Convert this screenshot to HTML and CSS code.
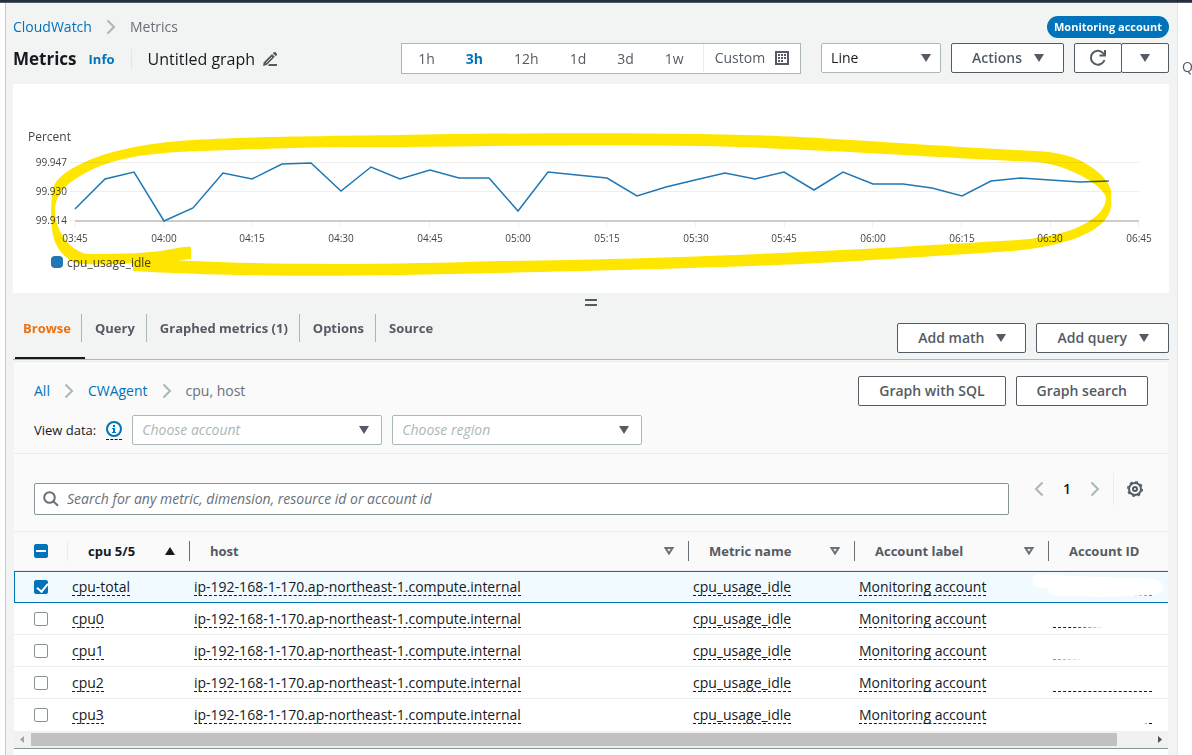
FILE: index.html
```html
<!DOCTYPE html>
<html lang="en">

<head>
    <meta charset="UTF-8">
    <meta name="viewport" content="width=device-width, initial-scale=1.0">
    <title>CloudWatch Metrics</title>
    <link rel="stylesheet" href="styles.css">
</head>

<body>
    <div class="topbar"></div>
    <div class="layout">
        <div class="left-rail"></div>

        <main class="main">
            <div class="crumb-row">
                <nav class="breadcrumb">
                    <a href="#">CloudWatch</a>
                    <svg class="chevron" viewBox="0 0 10 16"><path d="M1.500 1.500 8 8l-6.500 6.500" /></svg>
                    <span>Metrics</span>
                </nav>
                <span class="badge">Monitoring account</span>
            </div>

            <header class="title-row">
                <div class="title-group">
                    <h1>Metrics</h1>
                    <a class="info" href="#">Info</a>
                    <div class="graph-name">
                        <span>Untitled graph</span>
                        <svg class="pencil" viewBox="0 0 14 14">
                            <path d="M0 14l.8-3.800L9 2l2.800 2.800L3.800 13z" fill="#545b64" />
                            <path d="M3.200 10.800 9 5" stroke="#f2f3f3" stroke-width=".8" />
                            <path d="m9.800 1.200 1.200-1.200h1.200L14 1.800V3l-1.200 1.200zM6 12h8v2H5z" fill="#545b64" />
                        </svg>
                    </div>
                </div>

                <div class="controls">
                    <div class="range">
                        <button>1h</button>
                        <button class="active">3h</button>
                        <button>12h</button>
                        <button>1d</button>
                        <button>3d</button>
                        <button>1w</button>
                        <button class="custom">Custom
                            <svg width="14" height="14" viewBox="0 0 14 14">
                                <rect x="1" y="1" width="12" height="12" fill="#fff" stroke="#545b64" stroke-width="2" />
                                <path d="M3 4h8M3 7h8M3 10h5" stroke="#545b64" stroke-width="2" stroke-dasharray="2 1" />
                            </svg>
                        </button>
                    </div>
                    <div class="select chart-type">
                        <select aria-label="Chart type">
                            <option>Line</option>
                        </select>
                        <svg class="caret" viewBox="0 0 10 8"><path d="M0 0h10L5 8z" /></svg>
                    </div>
                    <button class="btn">Actions <svg class="caret" viewBox="0 0 10 8"><path d="M0 0h10L5 8z" /></svg></button>
                    <div class="btn-group">
                        <button class="btn" aria-label="Refresh">
                            <svg width="18" height="18" viewBox="0 0 18 18" fill="none" stroke="#545b64" stroke-width="2">
                                <path d="M15.500 11A7 7 0 1 1 14.500 4.500L16 6" />
                                <path d="M16 1v5.500h-5.500" />
                            </svg>
                        </button>
                        <button class="btn" aria-label="Refresh options"><svg class="caret" viewBox="0 0 10 8"><path d="M0 0h10L5 8z" /></svg></button>
                    </div>
                </div>
            </header>

            <section class="chart">
                <svg viewBox="13 84 1156 209">
                    <text x="28" y="141" class="unit">Percent</text>
                    <g class="grid">
                        <path d="M70 162.500H1139M70 191.500H1139M70 220.500H75" />
                        <path d="M75 222v5M163.500 222v5M252.500 222v5M340.500 222v5M429.500 222v5M518.500 222v5M606.500 222v5M695.500 222v5M784.500 222v5M872.500 222v5M961.500 222v5M1050.500 222v5M1138.500 222v5" />
                    </g>
                    <path d="M75 221H1139" stroke="#ccc" stroke-width="2" />
                    <g class="y-labels">
                        <text x="67" y="166">99.947</text>
                        <text x="67" y="195">99.930</text>
                        <text x="67" y="224">99.914</text>
                    </g>
                    <g class="x-labels">
                        <text x="75" y="242">03:45</text>
                        <text x="164" y="242">04:00</text>
                        <text x="252" y="242">04:15</text>
                        <text x="341" y="242">04:30</text>
                        <text x="430" y="242">04:45</text>
                        <text x="518" y="242">05:00</text>
                        <text x="607" y="242">05:15</text>
                        <text x="696" y="242">05:30</text>
                        <text x="784" y="242">05:45</text>
                        <text x="873" y="242">06:00</text>
                        <text x="962" y="242">06:15</text>
                        <text x="1050" y="242">06:30</text>
                        <text x="1139" y="242">06:45</text>
                    </g>
                    <polyline class="series" points="75,209 105,179 134,172 164,221 193,208 223,173 252,179 282,164 311,163 341,191 371,167 400,179 430,170 459,178 489,178 518,211 548,172 577,175 607,178 637,196 666,187 695,180 725,173 755,179 784,172 814,190 843,172 873,184 903,184 932,188 962,196 991,181 1021,178 1050,180 1080,182 1109,181" />
                    <rect x="51" y="256" width="12" height="12" rx="4" fill="#1f77b4" />
                    <text x="67" y="267" class="legend">cpu_usage_idle</text>
                    <path class="marker" d="M133 271C200 275 300 277 400 275S700 269 800 264S960 254 1000 252C1080 247 1111 225 1111 205V190C1108 178 1085 152 1035 151C950 147 860 140 800 137C700 132 500 133 400 135C250 137 180 138 140 146C90 155 58 172 53 188C50 205 51 225 53 235C57 253 70 262 80 264C100 265 120 264 133 263L150 262C165 262 180 260 191 259V247C180 246 170 251 150 252C130 254 105 254 86 254C70 250 56 232 55 212C55 195 65 185 80 176C120 152 170 152 233 150C300 147 350 147 400 147C500 146 600 144 700 146C800 148 950 158 1035 162C1070 164 1106 188 1106 198C1106 210 1090 238 1000 241C950 244 850 250 800 252C700 257 600 260 500 261C400 264 300 266 180 260.500L133 257Z" />
                </svg>
            </section>

            <div class="handle"></div>

            <div class="tabs-row">
                <nav class="tabs">
                    <a class="active" href="#">Browse</a>
                    <a href="#">Query</a>
                    <a href="#">Graphed metrics (1)</a>
                    <a href="#">Options</a>
                    <a href="#">Source</a>
                </nav>
                <div class="tab-actions">
                    <button class="btn">Add math <svg class="caret" viewBox="0 0 10 8"><path d="M0 0h10L5 8z" /></svg></button>
                    <button class="btn">Add query <svg class="caret" viewBox="0 0 10 8"><path d="M0 0h10L5 8z" /></svg></button>
                </div>
            </div>

            <section class="panel">
                <div class="panel-head">
                    <div class="panel-top">
                        <nav class="breadcrumb">
                            <a href="#">All</a>
                            <svg class="chevron" viewBox="0 0 10 16"><path d="M1.500 1.500 8 8l-6.500 6.500" /></svg>
                            <a href="#">CWAgent</a>
                            <svg class="chevron" viewBox="0 0 10 16"><path d="M1.500 1.500 8 8l-6.500 6.500" /></svg>
                            <span>cpu, host</span>
                        </nav>
                        <div class="tab-actions">
                            <button class="btn">Graph with SQL</button>
                            <button class="btn">Graph search</button>
                        </div>
                    </div>
                    <div class="view-data">
                        <label for="account">View data:</label>
                        <span class="info-icon">
                            <svg width="16" height="16" viewBox="0 0 16 16">
                                <circle cx="8" cy="8" r="7" fill="none" stroke="#0073bb" stroke-width="2" />
                                <path d="M7 4h2v2H7zM6 7h3v4h1v1H6v-1h1V8H6z" fill="#0073bb" />
                            </svg>
                        </span>
                        <div class="select placeholder">
                            <select id="account">
                                <option>Choose account</option>
                            </select>
                            <svg class="caret" viewBox="0 0 10 8"><path d="M0 0h10L5 8z" /></svg>
                        </div>
                        <div class="select placeholder">
                            <select aria-label="Region">
                                <option>Choose region</option>
                            </select>
                            <svg class="caret" viewBox="0 0 10 8"><path d="M0 0h10L5 8z" /></svg>
                        </div>
                    </div>
                </div>

                <div class="search-row">
                    <div class="search">
                        <svg width="16" height="16" viewBox="0 0 16 16" fill="none" stroke="#687078" stroke-width="2">
                            <circle cx="6.500" cy="6.500" r="5.300" />
                            <path d="m10.500 10.500 4.500 4.300" />
                        </svg>
                        <input type="text" aria-label="Search metrics" placeholder="Search for any metric, dimension, resource id or account id">
                    </div>
                    <div class="pager">
                        <button aria-label="Previous page"><svg class="chevron" viewBox="0 0 10 16"><path d="M8.500 1.500 2 8l6.500 6.500" /></svg></button>
                        <span>1</span>
                        <button aria-label="Next page"><svg class="chevron" viewBox="0 0 10 16"><path d="M1.500 1.500 8 8l-6.500 6.500" /></svg></button>
                        <button class="settings" aria-label="Settings">
                            <svg width="16" height="16" viewBox="0 0 16 16" fill="none" stroke="#545b64">
                                <circle cx="8" cy="8" r="6" stroke-width="2" />
                                <circle cx="8" cy="8" r="7.300" stroke-width="1.400" stroke-dasharray="2.870 2.870" />
                                <circle cx="8" cy="8" r="2" stroke-width="2" />
                            </svg>
                        </button>
                    </div>
                </div>

                <div class="table-wrap">
                    <table>
                        <colgroup>
                            <col class="col-check">
                            <col class="col-cpu">
                            <col>
                            <col class="col-metric">
                            <col class="col-label">
                            <col class="col-id">
                        </colgroup>
                        <thead>
                            <tr>
                                <th class="check"><input type="checkbox" class="some" aria-label="Select all"></th>
                                <th class="sorted"><div>cpu 5/5 <svg width="10" height="8" viewBox="0 0 10 8"><path d="M5 0l5 8H0z" fill="#16191f" /></svg></div></th>
                                <th><div>host <svg class="sort" viewBox="0 0 10 8"><path d="M1.500 1h7L5 6.500z" /></svg></div></th>
                                <th><div>Metric name <svg class="sort" viewBox="0 0 10 8"><path d="M1.500 1h7L5 6.500z" /></svg></div></th>
                                <th><div>Account label <svg class="sort" viewBox="0 0 10 8"><path d="M1.500 1h7L5 6.500z" /></svg></div></th>
                                <th><div>Account ID</div></th>
                            </tr>
                        </thead>
                        <tbody>
                            <tr class="selected">
                                <td class="check"><input type="checkbox" checked aria-label="cpu-total"></td>
                                <td><span class="term">cpu-total</span></td>
                                <td><span class="term">ip-192-168-1-170.ap-northeast-1.compute.internal</span></td>
                                <td><span class="term">cpu_usage_idle</span></td>
                                <td><span class="term">Monitoring account</span></td>
                                <td class="masked"><span class="term account-id fade-tail"></span>
                                    <svg class="smudge" width="132" height="26" viewBox="0 0 132 26"><path d="M8 1C35 3 70 4 100 5C115 5 125 6 130 10C133 15 129 21 122 22C100 24 50 24 24 23C18 22 16 19 16 14C12 16 6 16 2 12C-2 6 2 1 8 1Z" fill="#fff" /></svg>
                                </td>
                            </tr>
                            <tr>
                                <td class="check"><input type="checkbox" aria-label="cpu0"></td>
                                <td><span class="term">cpu0</span></td>
                                <td><span class="term">ip-192-168-1-170.ap-northeast-1.compute.internal</span></td>
                                <td><span class="term">cpu_usage_idle</span></td>
                                <td><span class="term">Monitoring account</span></td>
                                <td><span class="term account-id fade-half"></span></td>
                            </tr>
                            <tr>
                                <td class="check"><input type="checkbox" aria-label="cpu1"></td>
                                <td><span class="term">cpu1</span></td>
                                <td><span class="term">ip-192-168-1-170.ap-northeast-1.compute.internal</span></td>
                                <td><span class="term">cpu_usage_idle</span></td>
                                <td><span class="term">Monitoring account</span></td>
                                <td><span class="term account-id fade-most"></span></td>
                            </tr>
                            <tr>
                                <td class="check"><input type="checkbox" aria-label="cpu2"></td>
                                <td><span class="term">cpu2</span></td>
                                <td><span class="term">ip-192-168-1-170.ap-northeast-1.compute.internal</span></td>
                                <td><span class="term">cpu_usage_idle</span></td>
                                <td><span class="term">Monitoring account</span></td>
                                <td><span class="term account-id"></span></td>
                            </tr>
                            <tr>
                                <td class="check"><input type="checkbox" aria-label="cpu3"></td>
                                <td><span class="term">cpu3</span></td>
                                <td><span class="term">ip-192-168-1-170.ap-northeast-1.compute.internal</span></td>
                                <td><span class="term">cpu_usage_idle</span></td>
                                <td><span class="term">Monitoring account</span></td>
                                <td><span class="term account-id fade-start"></span></td>
                            </tr>
                        </tbody>
                    </table>
                </div>
                <div class="scrollbar">
                    <svg width="17" height="17" viewBox="0 0 17 17"><path d="M10 5v7L6 8.500z" fill="#a3a3a3" /></svg>
                    <div class="track"><div class="thumb"></div></div>
                    <svg width="17" height="17" viewBox="0 0 17 17"><path d="M7 5v7l4-3.500z" fill="#505050" /></svg>
                </div>
            </section>
            <div class="panel-rest"></div>
        </main>

        <aside class="right-rail">Q</aside>
    </div>
</body>

</html>
```
FILE: styles.css
```css
* {
    box-sizing: border-box;
}

body {
    margin: 0;
    height: 100vh;
    display: flex;
    flex-direction: column;
    overflow: hidden;
    background: #f2f3f3;
    color: #16191f;
    font-family: "Open Sans", "Noto Sans", sans-serif;
    font-size: 14px;
    line-height: 20px;
}

a {
    color: #0073bb;
    text-decoration: none;
}

button,
input,
select {
    font: inherit;
    color: inherit;
}

button {
    padding: 0;
    border: none;
    background: none;
}

svg {
    display: block;
    flex: none;
}

.topbar {
    flex: none;
    height: 3px;
    background: #232f3e;
    border-bottom: 1px solid #545b64;
}

.layout {
    flex: 1;
    display: flex;
    min-height: 0;
}

.left-rail {
    flex: none;
    width: 6px;
    background: #fff;
    border-right: 1px solid #c6cacb;
}

.right-rail {
    flex: none;
    width: 15px;
    padding: 54px 0 0 4px;
    overflow: hidden;
    background: #fff;
    border-left: 1px solid #e3e6e6;
    color: #545b64;
}

.main {
    flex: 1;
    min-width: 0;
    display: flex;
    flex-direction: column;
    padding: 13px 8px 0 7px;
}

/* page header */
.crumb-row {
    display: flex;
    justify-content: space-between;
    align-items: center;
    height: 22px;
}

.breadcrumb {
    display: flex;
    align-items: center;
    gap: 14px;
    color: #687078;
}

.chevron {
    width: 10px;
    height: 16px;
    fill: none;
    stroke: #aab7b8;
    stroke-width: 2;
}

.badge {
    padding: 0 7px;
    border-radius: 11px;
    background: #0073bb;
    color: #fff;
    font-size: 11px;
    font-weight: 700;
    line-height: 22px;
}

.title-row {
    display: flex;
    justify-content: space-between;
    align-items: flex-start;
    padding: 5px 0 10px;
}

.title-group {
    display: flex;
    align-items: center;
    height: 31px;
    gap: 12px;
    white-space: nowrap;
}

h1 {
    margin: 0;
    font-size: 17px;
    font-weight: 700;
}

.info {
    font-size: 13px;
    font-weight: 700;
}

.graph-name {
    display: flex;
    align-items: center;
    gap: 8px;
    margin-left: 4px;
    padding-left: 16px;
    border-left: 1px solid #e3e6e6;
    font-size: 16px;
}

.pencil {
    width: 14px;
    height: 14px;
}

.controls {
    display: flex;
    gap: 10px;
}

.range {
    display: flex;
    height: 31px;
    margin-right: 10px;
    border: 1px solid #aab7b8;
    background: #fff;
    color: #545b64;
}

.range button {
    padding: 0 15px 0 16px;
}

.range .active {
    color: #0073bb;
    font-weight: 700;
}

.range .custom {
    display: flex;
    align-items: center;
    gap: 10px;
    margin: 0 0 1px 4px;
    padding: 0 11px;
    border-left: 1px solid #eaeded;
}

.btn {
    display: flex;
    align-items: center;
    justify-content: center;
    gap: 12px;
    height: 30px;
    padding: 0 19px 0 20px;
    border: 1px solid #545b64;
    border-radius: 2px;
    background: #fff;
    color: #545b64;
    font-weight: 600;
}

.btn-group {
    display: flex;
}

.btn-group .btn {
    width: 48px;
    padding: 0;
}

.btn-group .btn + .btn {
    margin-left: -1px;
}

.caret {
    width: 10px;
    height: 8px;
    fill: #545b64;
}

.select {
    position: relative;
    width: 250px;
    height: 30px;
}

.select select {
    width: 100%;
    height: 100%;
    padding: 0 9px;
    border: 1px solid #aab7b8;
    border-radius: 2px;
    background: #fff;
    appearance: none;
}

.select .caret {
    position: absolute;
    right: 13px;
    top: 11px;
    pointer-events: none;
}

.chart-type {
    width: 120px;
}

.chart-type .caret {
    right: 10px;
}

.placeholder select {
    color: #aab7b8;
    font-style: italic;
}

/* chart */
.chart {
    background: #fff;
}

.chart svg {
    width: 100%;
    height: auto;
}

.chart text {
    fill: #444;
    font-size: 10px;
}

.chart .unit,
.chart .legend {
    font-size: 12px;
}

.y-labels {
    text-anchor: end;
}

.x-labels {
    text-anchor: middle;
}

.grid {
    fill: none;
    stroke: #eee;
}

.series {
    fill: none;
    stroke: #1f77b4;
    stroke-width: 1.5;
}

.marker {
    fill: #ffe600;
    mix-blend-mode: multiply;
}

.handle {
    flex: none;
    align-self: center;
    width: 12px;
    height: 7px;
    margin: 6px 0 2px;
    border: solid #545b64;
    border-width: 2px 0;
}

/* tabs */
.tabs-row {
    display: flex;
    justify-content: space-between;
    height: 52px;
    border-bottom: 1px solid #aab7b8;
}

.tabs {
    display: flex;
    margin-left: 2px;
}

.tabs a {
    display: flex;
    position: relative;
    padding: 10px 12px 0 13px;
    color: #545b64;
    font-size: 13px;
    font-weight: 700;
}

.tabs a:first-child {
    padding: 10px 11px 0 8px;
}

.tabs a:not(:last-child)::after {
    content: "";
    position: absolute;
    right: 0;
    top: 6px;
    height: 28px;
    border-right: 1px solid #aab7b8;
}

.tabs .active {
    color: #ec7211;
}

.tabs .active::before {
    content: "";
    position: absolute;
    left: 0;
    right: -3px;
    bottom: 0;
    height: 2px;
    background: #16191f;
}

.tab-actions {
    display: flex;
    gap: 10px;
}

.tabs-row .tab-actions {
    padding-top: 15px;
}

/* metrics browser */
.panel {
    margin: 1px 1px 0;
    border-top: 1px solid #eaeded;
    background: #fafafa;
}

.panel-head {
    padding: 14px 20px 8px;
    border-bottom: 1px solid #eaeded;
}

.panel-top {
    display: flex;
    justify-content: space-between;
    align-items: center;
}

.panel-top .btn {
    padding: 0 20px;
}

.panel-rest {
    flex: 1;
    margin: 0 1px;
    background: #fff;
}

.view-data {
    display: flex;
    align-items: center;
    gap: 10px;
    margin-top: 9px;
}

.view-data label {
    font-size: 13px;
}

.info-icon {
    padding-bottom: 2px;
    border-bottom: 1px dashed #16191f;
}

.search-row {
    display: flex;
    align-items: flex-start;
    padding: 29px 20px 16px;
    border-bottom: 1px solid #eaeded;
}

.search {
    flex: 1;
    display: flex;
    align-items: center;
    gap: 8px;
    height: 32px;
    padding: 0 8px;
    border: 1px solid #879596;
    border-radius: 2px;
    background: #fff;
}

.search input {
    flex: 1;
    padding: 0;
    border: none;
    outline: none;
    background: none;
}

.search input::placeholder {
    color: #687078;
    font-style: italic;
}

.pager {
    display: flex;
    align-items: center;
    gap: 19px;
    height: 32px;
    margin: -10px 5px 0 25px;
    font-weight: 600;
}

.settings {
    display: flex;
    align-items: center;
    height: 32px;
    margin-left: -6px;
    padding-left: 13px;
    border-left: 1px solid #eaeded;
}

.table-wrap {
    overflow: hidden;
    background: #fff;
}

table {
    width: 100%;
    table-layout: fixed;
    border-collapse: separate;
    border-spacing: 0;
}

.col-check {
    width: 54px;
}

.col-cpu {
    width: 122px;
}

.col-metric {
    width: 166px;
}

.col-label {
    width: 194px;
}

.col-id {
    width: 119px;
}

th {
    height: 39px;
    padding: 0;
    border-bottom: 1px solid #eaeded;
    background: #fafafa;
    color: #545b64;
    font-size: 13px;
    font-weight: 700;
    text-align: left;
}

th div {
    display: flex;
    align-items: center;
    justify-content: space-between;
    padding: 0 14px 0 20px;
    border-right: 1px solid #687078;
}

th:last-child div {
    border-right: none;
}

th.check {
    padding-left: 20px;
    background: linear-gradient(#eaeded, #eaeded) right / 1px 20px no-repeat #fafafa;
}

.sorted {
    color: #16191f;
}

.sort {
    width: 10px;
    height: 8px;
    fill: none;
    stroke: #687078;
    stroke-width: 2;
}

td {
    height: 32px;
    padding: 0 0 2px 4px;
    border-bottom: 1px solid #eaeded;
    white-space: nowrap;
}

td.check {
    padding: 0 0 0 20px;
}

.selected td {
    border-top: 1px solid #0073bb;
    border-bottom: 1px solid #0073bb;
    background: #f1faff;
}

.selected td.check {
    border-left: 1px solid #0073bb;
    padding-left: 19px;
}

tbody tr:last-child td {
    border-bottom: none;
}

.term {
    display: inline-block;
    border-bottom: 1px dashed #16191f;
    line-height: 17px;
    vertical-align: middle;
}

input[type="checkbox"] {
    display: block;
    width: 14px;
    height: 14px;
    margin: 0;
    border: 1px solid #879596;
    border-radius: 2px;
    background: #fff;
    appearance: none;
}

input[type="checkbox"]:checked,
input[type="checkbox"].some {
    border-color: #0073bb;
    background: #0073bb;
}

input[type="checkbox"].some::before {
    content: "";
    display: block;
    height: 2px;
    margin: 5px 1px;
    background: #fff;
}

input[type="checkbox"]:checked::before {
    content: "";
    display: block;
    width: 5px;
    height: 9px;
    margin: 0 4px;
    border: solid #fff;
    border-width: 0 2px 2px 0;
    transform: rotate(40deg);
}

.masked {
    position: relative;
}

.smudge {
    position: absolute;
    left: -17px;
    top: 1px;
}

/* hidden account numbers, only part of the underline shows */
.account-id {
    width: 99px;
    height: 18px;
}

.fade-half {
    mask-image: linear-gradient(90deg, #000 20%, transparent 52%);
}

.fade-most {
    mask-image: linear-gradient(90deg, rgba(0, 0, 0, 0.5), transparent 32%);
}

/* stays visible above the smudge */
.fade-tail {
    position: relative;
    z-index: 1;
    mask-image: linear-gradient(90deg, transparent 80%, rgba(0, 0, 0, 0.6));
}

.fade-start {
    mask-image: linear-gradient(90deg, transparent 92%, #000 97%);
}

.scrollbar {
    display: flex;
    height: 18px;
    border-bottom: 1px solid #879596;
    background: #f1f1f1;
}

.track {
    flex: 1;
    padding: 2px 0;
}

.thumb {
    width: 97%;
    height: 13px;
    background: #c1c1c1;
}
```
